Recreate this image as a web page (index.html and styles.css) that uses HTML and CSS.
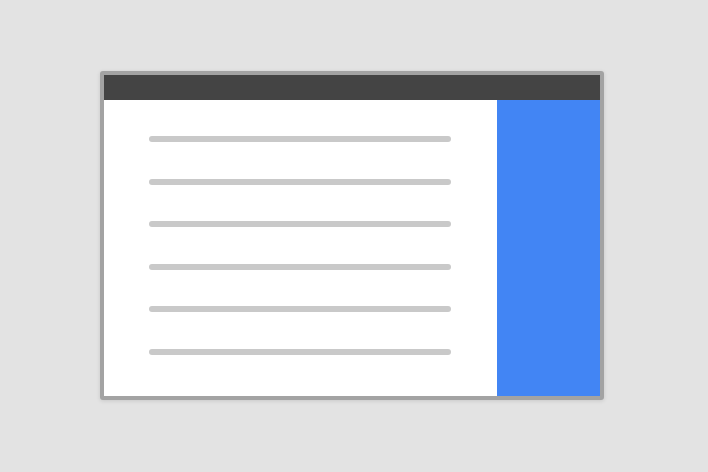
FILE: index.html
```html
<!doctype html>
<html lang="en">
<head>
	<meta charset="UTF-8">
	<title>Side panel</title>
	<link rel="stylesheet" href="styles.css">
</head>
<body>
	<div class="window">
		<div class="titlebar"></div>
		<div class="content">
			<div class="main">
				<span class="line"></span>
				<span class="line"></span>
				<span class="line"></span>
				<span class="line"></span>
				<span class="line"></span>
				<span class="line"></span>
			</div>
			<div class="side"></div>
		</div>
	</div>
</body>
</html>
```
FILE: styles.css
```css
* { padding: 0; margin: 0; box-sizing: border-box; }
html, body { height: 100%; }
body { background: #e3e3e3; padding: 71px 0 0 100px; font-family: "Liberation Sans", sans-serif; }
.window { width: 504px; height: 329px; border: 4px solid #a3a3a3; border-radius: 3px; background: #fff; box-shadow: 0 1px 4px rgba(0,0,0,0.12); display: flex; flex-direction: column; }
.titlebar { height: 25px; background: #444; flex: none; }
.content { flex: 1; display: flex; }
.main { flex: 1; display: flex; flex-direction: column; padding: 36px 0 0 45px; gap: 36.6px; }
.line { display: block; width: 302px; height: 6px; border-radius: 3px; background: #c9c9c9; }
.side { width: 103px; background: #4285f4; }
```
